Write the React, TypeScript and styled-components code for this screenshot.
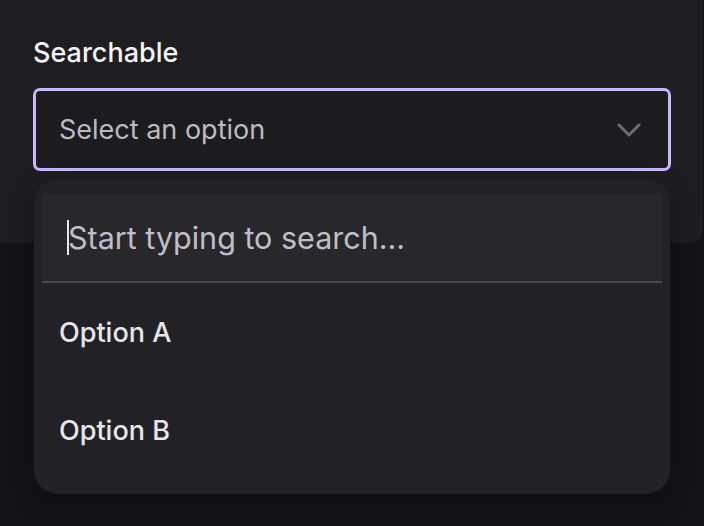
import React from "react";
import styled, { createGlobalStyle } from "styled-components";

const GlobalStyle = createGlobalStyle`
    body {
        margin: 0;
        background: #141318;
        font-family: Inter, "Noto Sans", sans-serif;
    }
`;

const Page = styled.div`
    position: relative;
    height: 526px;
    overflow: hidden;
`;

const Card = styled.div`
    margin: -20px 0 0 -20px;
    width: 723px;
    height: 263px;
    box-sizing: border-box;
    padding: 57px 0 0 53px;
    background: #1e1d22;
    border-radius: 14px;
`;

const Label = styled.div`
    color: #f4f3f6;
    font-size: 27px;
    font-weight: 500;
    line-height: 32px;
    margin-bottom: 19px;
`;

const Trigger = styled.div`
    width: 638px;
    height: 83px;
    box-sizing: border-box;
    display: flex;
    align-items: center;
    justify-content: space-between;
    padding: 0 27px 0 23px;
    background: #1c1b20;
    border: 3px solid #cbb6fb;
    border-radius: 7px;
`;

const Placeholder = styled.span`
    color: #bdbac2;
    font-size: 27px;
`;

const Chevron = styled.svg`
    width: 24px;
    height: 14px;
    color: #6b6e77;
`;

const Popup = styled.div`
    position: absolute;
    left: 34px;
    top: 179px;
    width: 636px;
    height: 315px;
    box-sizing: border-box;
    padding: 15px 8px;
    background: #222126;
    border-radius: 24px;
    box-shadow: 0 8px 24px rgba(0, 0, 0, 0.35);
`;

const Search = styled.div`
    height: 89px;
    box-sizing: border-box;
    display: flex;
    align-items: center;
    padding-left: 25px;
    background: #28272c;
    border-bottom: 2px solid #4a4950;
`;

const Caret = styled.span`
    width: 2px;
    height: 35px;
    background: #e6e4ea;
    margin-right: -1px;
`;

const SearchText = styled.span`
    color: #c2bec9;
    font-size: 30.5px;
`;

const Option = styled.div`
    height: 98px;
    display: flex;
    align-items: center;
    padding-left: 17px;
    color: #e8e6ec;
    font-size: 27px;
    font-weight: 450;
`;

const App = () => {
    const options = ["Option A", "Option B"];

    return (
        <Page>
            <GlobalStyle />
            <Card>
                <Label>Searchable</Label>
                <Trigger>
                    <Placeholder>Select an option</Placeholder>
                    <Chevron viewBox="0 0 24 14" fill="none">
                        <polyline
                            points="2,2 12,12 22,2"
                            stroke="currentColor"
                            strokeWidth="3"
                            strokeLinecap="round"
                            strokeLinejoin="round"
                        />
                    </Chevron>
                </Trigger>
            </Card>
            <Popup>
                <Search>
                    <Caret />
                    <SearchText>Start typing to search...</SearchText>
                </Search>
                {options.map((option) => (
                    <Option key={option}>{option}</Option>
                ))}
            </Popup>
        </Page>
    );
};

export default App;
